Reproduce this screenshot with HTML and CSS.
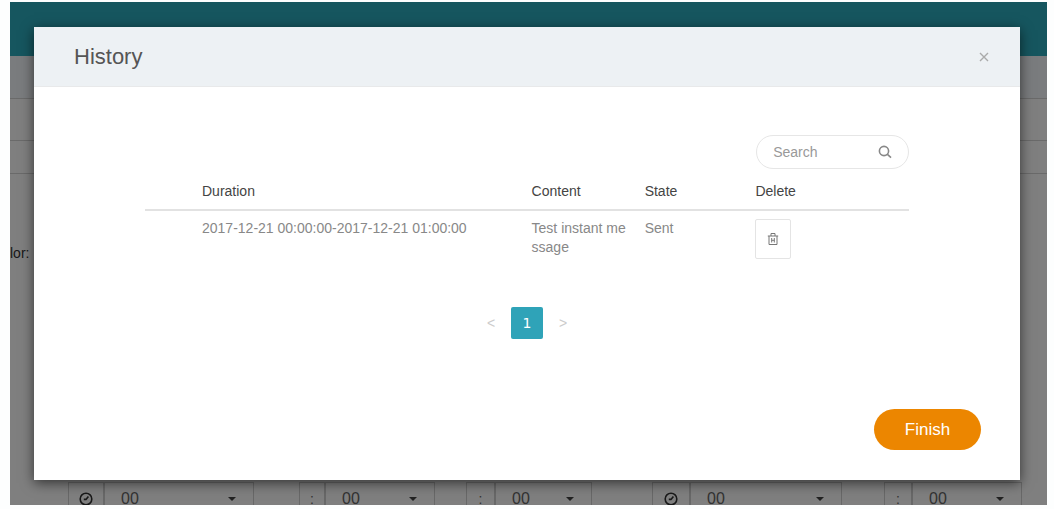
FILE: index.html
```html
<!DOCTYPE html>
<html lang="en">
<head>
  <meta charset="UTF-8">
  <title>History</title>
  <link rel="stylesheet" href="styles.css">
</head>
<body>

<div class="page">
  <div class="topbar"></div>
  <div class="subbar"></div>
  <div class="row"></div>
  <div class="row short"></div>
  <div class="field">lor:</div>

  <div class="times">
    <span class="cell">
      <svg class="clock" viewBox="0 0 14 14"><circle cx="7" cy="7" r="5.8"/><path d="M4.8 7.4 H7 L9.4 4.4"/></svg>
    </span>
    <select class="cell" aria-label="Start hour"><option>00</option></select>
    <span></span>
    <span class="cell">:</span>
    <select class="cell" aria-label="Start minute"><option>00</option></select>
    <span></span>
    <span class="cell">:</span>
    <select class="cell" aria-label="Start second"><option>00</option></select>
    <span></span>
    <span class="cell">
      <svg class="clock" viewBox="0 0 14 14"><circle cx="7" cy="7" r="5.8"/><path d="M4.8 7.4 H7 L9.4 4.4"/></svg>
    </span>
    <select class="cell" aria-label="End hour"><option>00</option></select>
    <span></span>
    <span class="cell">:</span>
    <select class="cell" aria-label="End minute"><option>00</option></select>
  </div>

  <div class="backdrop">
    <div class="modal" role="dialog" aria-labelledby="title">
      <div class="modal-header">
        <h1 id="title">History</h1>
        <button class="close" aria-label="Close">
          <svg viewBox="0 0 10 10"><path d="M1 1 L9 9 M9 1 L1 9"/></svg>
        </button>
      </div>

      <div class="modal-body">
        <div class="search">
          <input type="text" placeholder="Search" aria-label="Search">
          <svg viewBox="0 0 14 14"><circle cx="6" cy="6" r="4.6"/><path d="M9.2 9.2 L13 12.6"/></svg>
        </div>

        <table>
          <colgroup>
            <col class="col-duration">
            <col class="col-content">
            <col class="col-state">
            <col>
          </colgroup>
          <thead>
            <tr>
              <th>Duration</th>
              <th>Content</th>
              <th>State</th>
              <th>Delete</th>
            </tr>
          </thead>
          <tbody>
            <tr>
              <td>2017-12-21 00:00:00-2017-12-21 01:00:00</td>
              <td>Test instant message</td>
              <td>Sent</td>
              <td>
                <button class="delete" aria-label="Delete">
                  <svg viewBox="0 0 12 14"><path d="M0.8 4 H11.2 M4 4 V1.5 H8 V4 M2 4 V12.5 H10 V4 M4.7 6 V10.5 M7.3 6 V10.5 M4.7 8.3 H7.3"/></svg>
                </button>
              </td>
            </tr>
          </tbody>
        </table>

        <div class="pages">
          <button>&lt;</button>
          <button class="current">1</button>
          <button>&gt;</button>
        </div>
      </div>

      <div class="modal-footer">
        <button class="finish">Finish</button>
      </div>
    </div>
  </div>
</div>

</body>
</html>
```

FILE: styles.css
```css
* {
  box-sizing: border-box;
}

body {
  margin: 0;
  height: 100vh;
  padding: 2px 7px 4px 10px;
  background: #fdfefe;
  font-family: "Liberation Sans", Arial, sans-serif;
  font-size: 14px;
  color: #333;
  overflow: hidden;
}

button, input, select {
  font: inherit;
}

svg {
  fill: none;
  stroke: currentColor;
}

/* page behind the dialog */
.page {
  position: relative;
  height: 100%;
  overflow: hidden;
  background: #fff;
}

.topbar {
  height: 54px;
  background: #2cacbe;
}

.subbar {
  height: 43px;
  background: #f4f8fc;
  border-bottom: 1px solid #d4d4d4;
}

.row {
  height: 42px;
  border-bottom: 1px solid #d4d4d4;
}

.row.short {
  height: 33px;
}

.field {
  height: 308px;
  padding-top: 71px;
}

.times {
  display: grid;
  grid-template-columns: 36fr 150fr 45fr 26fr 110fr 31fr 29fr 97fr 60fr 38fr 152fr 42fr 28fr 110fr;
  height: 34px;
  padding: 0 25px 0 58px;
}

.cell {
  display: flex;
  align-items: center;
  justify-content: center;
  border: 1px solid #d0d0d0;
  border-left-width: 0;
  line-height: 16px;
  color: #666;
}

.cell:first-child,
span + .cell {
  border-left-width: 1px;
}

select.cell {
  appearance: none;
  padding: 0 16px;
  border-radius: 0;
  font-size: 16px;
  background: url("data:image/svg+xml,%3Csvg xmlns='http://www.w3.org/2000/svg' viewBox='0 0 8 4'%3E%3Cpath d='M0 0h8L4 4z' fill='%23444'/%3E%3C/svg%3E") no-repeat right 17px center / 8px 4px;
}

.clock {
  width: 14px;
  height: 14px;
  stroke: #333;
  stroke-width: 1.6;
}

/* dialog */
.backdrop {
  position: absolute;
  inset: 0;
  padding: 25px 27px 0 24px;
  background: rgba(0, 0, 0, 0.5);
}

.modal {
  background: #fff;
  box-shadow: 0 3px 12px rgba(0, 0, 0, 0.6);
}

.modal-header {
  display: flex;
  align-items: center;
  justify-content: space-between;
  height: 60px;
  padding: 0 31px 0 40px;
  background: #edf1f4;
  border-bottom: 1px solid #e8e9ea;
}

h1 {
  margin: 0;
  font-size: 22px;
  font-weight: normal;
  color: #555;
}

.close {
  display: flex;
  padding: 0;
  border: none;
  background: none;
  color: #aaa;
}

.close svg {
  width: 10px;
  height: 10px;
  stroke-width: 1.4;
}

.modal-body {
  padding: 48px 111px 0;
}

.search {
  display: flex;
  align-items: center;
  width: 20%;
  height: 34px;
  margin-left: auto;
  padding: 0 16px;
  border: 1px solid #e6e6e6;
  border-radius: 17px;
}

.search input {
  flex: 1;
  min-width: 0;
  padding: 0;
  border: none;
  outline: none;
  background: none;
}

.search input::placeholder {
  color: #999;
}

.search svg {
  width: 14px;
  height: 14px;
  color: #888;
  stroke-width: 1.6;
}

table {
  width: 100%;
  table-layout: fixed;
  border-collapse: collapse;
}

.col-duration {
  width: 50.6%;
}

.col-content {
  width: 14.8%;
}

.col-state {
  width: 14.5%;
}

th, td {
  padding: 0;
  text-align: left;
  vertical-align: top;
}

th {
  height: 41px;
  padding-top: 14px;
  border-bottom: 2px solid #e2e2e2;
  font-weight: normal;
  color: #444;
}

td {
  padding: 8px 16px 0 0;
  line-height: 19px;
  color: #888;
  word-break: break-all;
}

th:first-child,
td:first-child {
  padding-left: 57px;
}

.delete {
  display: flex;
  align-items: center;
  justify-content: center;
  width: 36px;
  height: 40px;
  border: 1px solid #e4e4e4;
  border-radius: 2px;
  background: #fff;
  color: #777;
}

.delete svg {
  flex: none;
  width: 12px;
  height: 14px;
}

.pages {
  display: flex;
  justify-content: center;
  gap: 4px;
  margin-top: 48px;
}

.pages button {
  width: 32px;
  height: 32px;
  padding: 0;
  border: none;
  background: none;
  color: #ccc;
}

.pages .current {
  border-radius: 2px;
  background: #2fa3b8;
  font-family: "DejaVu Sans", sans-serif;
  color: #fff;
}

.modal-footer {
  display: flex;
  justify-content: flex-end;
  padding: 70px 39px 30px;
}

.finish {
  width: 107px;
  height: 41px;
  border: none;
  border-radius: 21px;
  background: #ec8600;
  font-size: 17px;
  color: #fff;
}
```
